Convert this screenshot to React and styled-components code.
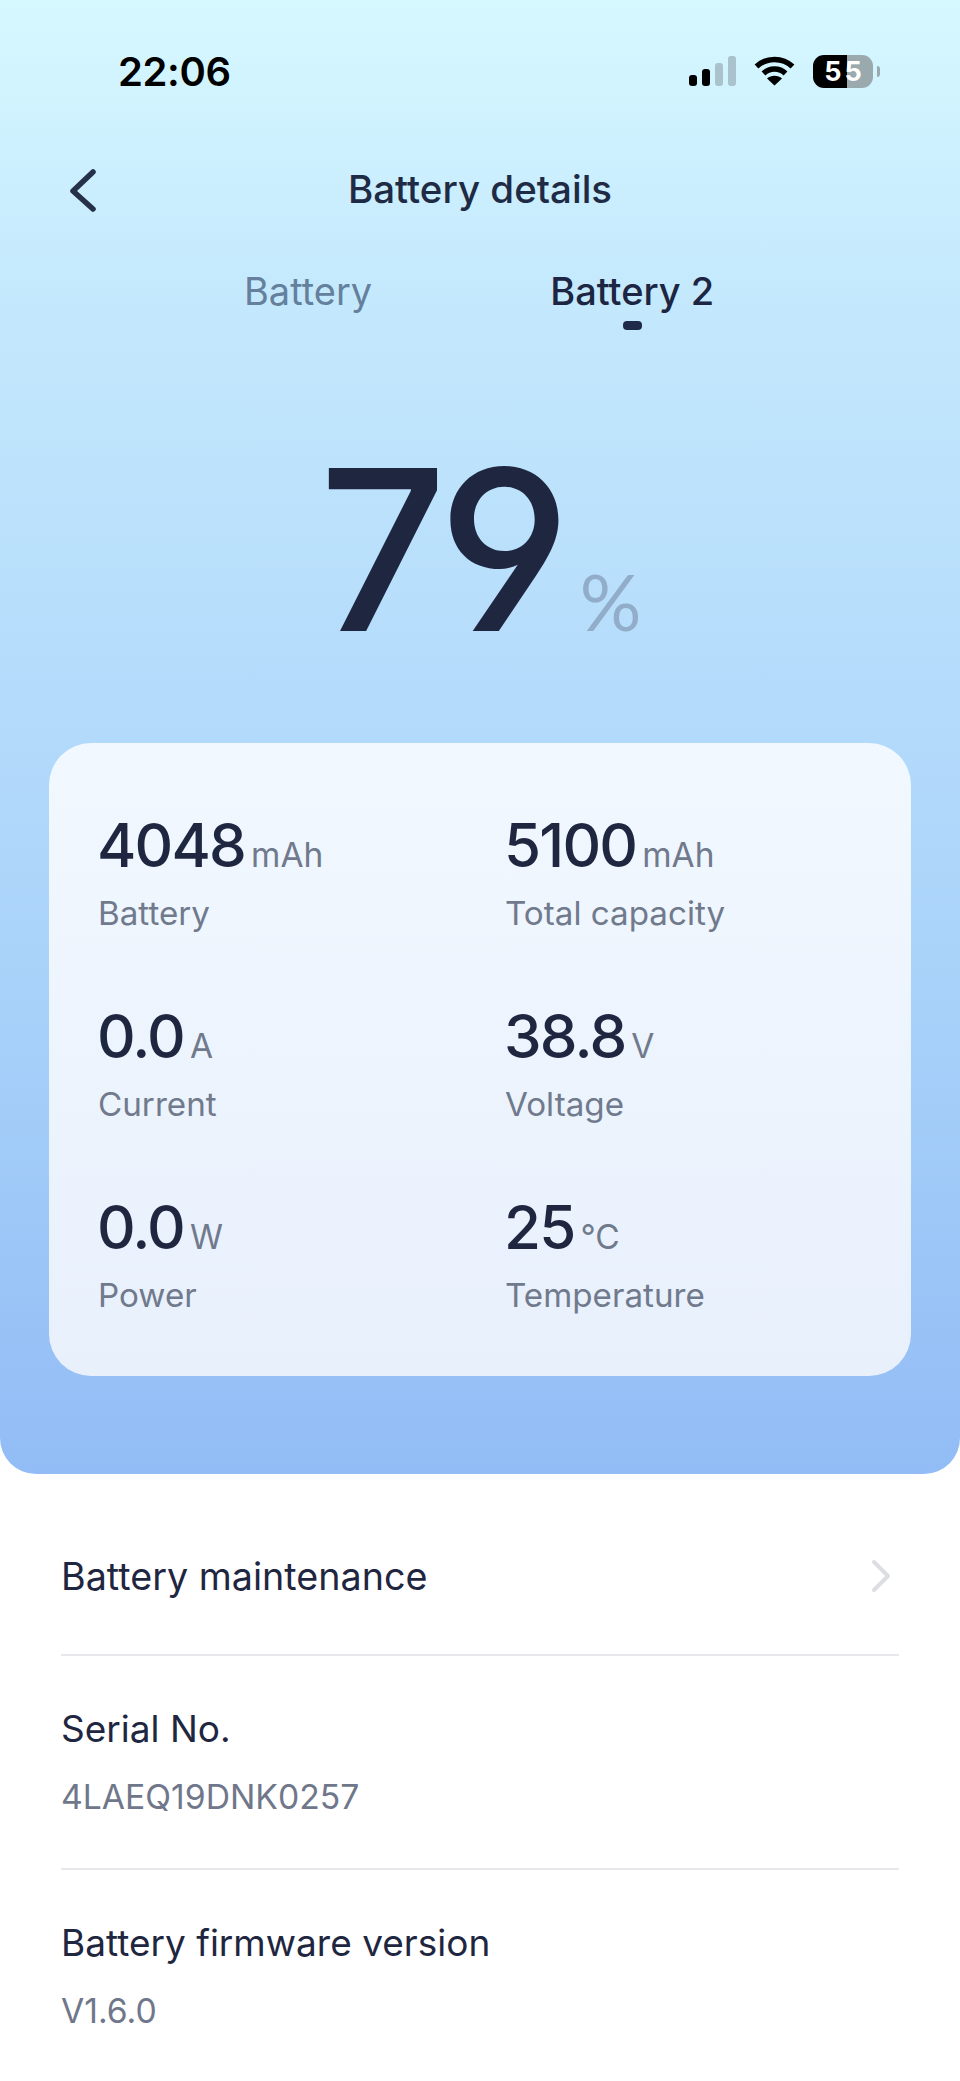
import React from "react";
import styled, { createGlobalStyle } from "styled-components";

const GlobalStyle = createGlobalStyle`
  html, body {
    margin: 0;
    padding: 0;
    background: #ffffff;
  }
  body {
    font-family: "Inter", "Noto Sans", sans-serif;
    overflow: hidden;
  }
`;

const Page = styled.div`
  width: 960px;
  height: 2081px;
  overflow: hidden;
  background: #ffffff;
  color: #1f2640;
`;

const Hero = styled.section`
  height: 1474px;
  box-sizing: border-box;
  padding-top: 54px;
  border-radius: 0 0 36px 36px;
  background: linear-gradient(
    180deg,
    #d6f8ff 0%,
    #c4e9fd 20%,
    #b5dcfb 45%,
    #aad3fa 65%,
    #92bcf5 100%
  );
`;

const StatusBar = styled.div`
  height: 34px;
  padding: 0 80px 0 118px;
  display: flex;
  align-items: center;
  justify-content: space-between;
`;

const Time = styled.span`
  font-size: 40px;
  font-weight: 600;
  letter-spacing: -0.4px;
  color: #000000;
`;

const StatusIcons = styled.div`
  display: flex;
  align-items: center;
`;

const SignalBars = styled.div`
  display: flex;
  align-items: flex-end;
  gap: 5px;
  height: 30px;
  margin-right: 18px;
`;

const SignalBar = styled.span`
  width: 8px;
  height: ${(p) => p.$h}px;
  border-radius: 3px;
  background: ${(p) => (p.$on ? "#000000" : "#a9c2cc")};
`;

const BatteryPill = styled.div`
  width: 60px;
  height: 33px;
  margin-left: 18px;
  border-radius: 11px;
  display: flex;
  align-items: center;
  justify-content: center;
  gap: 3px;
  font-size: 27px;
  font-weight: 700;
  background: linear-gradient(90deg, #000000 57%, #9aa9ae 57%);
  color: #ffffff;
`;

const BatteryNub = styled.span`
  width: 3px;
  height: 11px;
  margin-left: 4px;
  border-radius: 0 3px 3px 0;
  background: #9aa9ae;
`;

const NavBar = styled.header`
  margin-top: 67px;
  height: 68px;
  display: flex;
  align-items: center;
  position: relative;
  justify-content: center;
`;

const BackButton = styled.svg`
  position: absolute;
  left: 68px;
  top: 13px;
  width: 30px;
  height: 44px;
`;

const Title = styled.h1`
  margin: 0;
  font-size: 38.5px;
  font-weight: 500;
  color: #1f2a44;
`;

const Tabs = styled.nav`
  margin-top: 45px;
  display: flex;
  padding-left: 244px;
  gap: 178px;
`;

const Tab = styled.div`
  position: relative;
  font-size: 38px;
  line-height: 46px;
  font-weight: ${(p) => (p.$active ? 500 : 400)};
  color: ${(p) => (p.$active ? "#1c2542" : "#64809c")};
`;

const TabMark = styled.span`
  position: absolute;
  left: 73px;
  bottom: -16px;
  width: 19px;
  height: 9px;
  border-radius: 4px;
  background: #1f2a4a;
`;

const Gauge = styled.div`
  margin-top: 123px;
  padding-left: 319px;
  display: flex;
  align-items: baseline;
`;

const GaugeValue = styled.span`
  font-family: "Inter", sans-serif;
  font-feature-settings: "cv04";
  font-size: 224px;
  line-height: 226px;
  font-weight: 500;
  letter-spacing: -9px;
  color: #1f2640;
`;

const GaugeUnit = styled.span`
  margin-left: 18px;
  font-family: "Lato", sans-serif;
  font-size: 77px;
  color: #91adca;
`;

const StatCard = styled.div`
  margin: 80px 49px 0;
  height: 633px;
  box-sizing: border-box;
  padding: 66px 0 0 49px;
  border-radius: 42px;
  background: linear-gradient(180deg, #f1f8ff 0%, #e8f0fc 100%);
  display: grid;
  grid-template-columns: 407px 1fr;
  grid-auto-rows: 191px;
`;

const Stat = styled.div`
  display: flex;
  flex-direction: column;
`;

const StatValue = styled.div`
  display: flex;
  align-items: baseline;
  height: 72px;
  margin-left: -1px;
  font-family: "Inter", sans-serif;
  font-feature-settings: "cv04";
  font-size: 60px;
  font-weight: 450;
  line-height: 72px;
  letter-spacing: -1.8px;
  color: #1f2640;
`;

const StatUnit = styled.span`
  margin-left: 6px;
  font-size: 33.5px;
  font-weight: 400;
  letter-spacing: 0;
  color: #707a8c;
`;

const StatLabel = styled.div`
  margin-top: 10px;
  font-size: 33.2px;
  line-height: 44px;
  color: #707a8c;
`;

const InfoList = styled.div`
  padding: 0 61px;
`;

const InfoRow = styled.div`
  box-sizing: border-box;
  height: ${(p) => p.$h}px;
  display: flex;
  flex-direction: ${(p) => (p.$link ? "row" : "column")};
  align-items: ${(p) => (p.$link ? "center" : "flex-start")};
  justify-content: ${(p) => (p.$link ? "space-between" : "flex-start")};
  padding-top: ${(p) => p.$top || 0}px;
  border-bottom: ${(p) => (p.$last ? "none" : "2px solid #e6e8ec")};
`;

const InfoTitle = styled.div`
  font-size: ${(p) => p.$size || 37}px;
  line-height: 46px;
  color: #1f2640;
`;

const InfoValue = styled.div`
  margin-top: 22px;
  font-size: 33.7px;
  line-height: 46px;
  color: #70778a;
`;

const Chevron = styled.svg`
  width: 24px;
  height: 34px;
  margin-right: 6px;
`;

const stats = [
  { value: "4048", unit: "mAh", label: "Battery" },
  { value: "5100", unit: "mAh", label: "Total capacity" },
  { value: "0.0", unit: "A", label: "Current" },
  { value: "38.8", unit: "V", label: "Voltage" },
  { value: "0.0", unit: "W", label: "Power" },
  { value: "25", unit: "°C", label: "Temperature" },
];

const App = () => {
  return (
    <Page>
      <GlobalStyle />
      <Hero>
        <StatusBar>
          <Time>22:06</Time>
          <StatusIcons>
            <SignalBars>
              <SignalBar $on $h={11} />
              <SignalBar $on $h={17} />
              <SignalBar $h={23} />
              <SignalBar $h={30} />
            </SignalBars>
            <svg width="41" height="30" viewBox="0 0 41 30">
              <path d="M2.5 10.5C12.5 1 28.5 1 38.5 10.5" fill="none" stroke="#000" strokeWidth="5.5" />
              <path d="M9.5 17.5C15.5 11.5 25.5 11.5 31.5 17.5" fill="none" stroke="#000" strokeWidth="5.5" />
              <path d="M20.5 29.5L13 22.5C17 18.8 24 18.8 28 22.5Z" fill="#000" />
            </svg>
            <BatteryPill>
              <span>5</span>
              <span>5</span>
            </BatteryPill>
            <BatteryNub />
          </StatusIcons>
        </StatusBar>
        <NavBar>
          <BackButton viewBox="0 0 30 44" fill="none">
            <path d="M25 4L5 23L25 41" stroke="#25304a" strokeWidth="5.5" strokeLinecap="round" strokeLinejoin="round" />
          </BackButton>
          <Title>Battery details</Title>
        </NavBar>
        <Tabs>
          <Tab>Battery</Tab>
          <Tab $active>
            Battery 2
            <TabMark />
          </Tab>
        </Tabs>
        <Gauge>
          <GaugeValue>79</GaugeValue>
          <GaugeUnit>%</GaugeUnit>
        </Gauge>
        <StatCard>
          {stats.map((s) => (
            <Stat key={s.label}>
              <StatValue>
                {s.value}
                <StatUnit>{s.unit}</StatUnit>
              </StatValue>
              <StatLabel>{s.label}</StatLabel>
            </Stat>
          ))}
        </StatCard>
      </Hero>
      <InfoList>
        <InfoRow $link $h={182} $top={24}>
          <InfoTitle $size={37.7}>Battery maintenance</InfoTitle>
          <Chevron viewBox="0 0 24 34" fill="none">
            <path d="M5 3L19 17L5 31" stroke="#dcdee2" strokeWidth="4" strokeLinecap="round" strokeLinejoin="round" />
          </Chevron>
        </InfoRow>
        <InfoRow $h={214} $top={50}>
          <InfoTitle>Serial No.</InfoTitle>
          <InfoValue>4LAEQ19DNK0257</InfoValue>
        </InfoRow>
        <InfoRow $h={212} $top={50} $last>
          <InfoTitle>Battery firmware version</InfoTitle>
          <InfoValue>V1.6.0</InfoValue>
        </InfoRow>
      </InfoList>
    </Page>
  );
};

export default App;
